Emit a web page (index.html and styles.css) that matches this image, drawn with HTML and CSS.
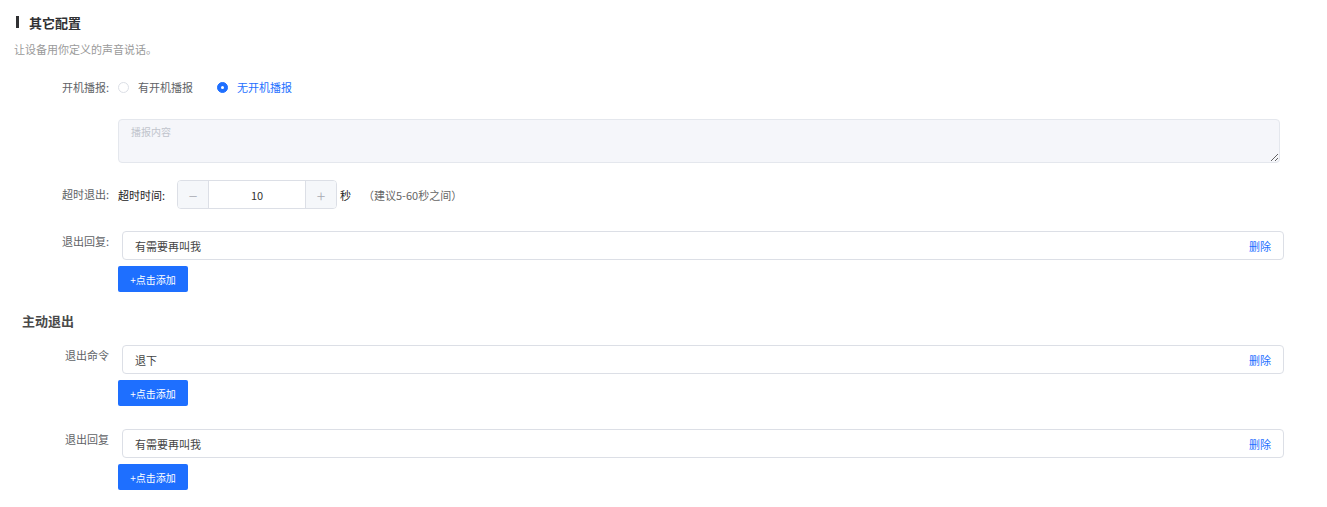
FILE: index.html
```html
<!DOCTYPE html>
<html lang="zh-CN">
<head>
  <meta charset="UTF-8">
  <title>其它配置</title>
  <link rel="stylesheet" href="styles.css">
</head>
<body>

<div class="page">
  <div class="section-title"><span class="bar"></span>其它配置</div>
  <div class="desc">让设备用你定义的声音说话。</div>

  <div class="form-item radio-row">
    <label class="label">开机播报:</label>
    <div class="content">
      <span class="radio"><i class="dot"></i>有开机播报</span>
      <span class="radio checked"><i class="dot"></i>无开机播报</span>
    </div>
  </div>

  <div class="form-item textarea-row">
    <div class="label"></div>
    <div class="content">
      <textarea class="textarea" placeholder="播报内容"></textarea>
    </div>
  </div>

  <div class="form-item timeout-row">
    <label class="label">超时退出:</label>
    <div class="content">
      <span class="sub-label">超时时间:</span>
      <div class="number">
        <span class="num-btn minus">−</span>
        <span class="num-value">10</span>
        <span class="num-btn plus">+</span>
      </div>
      <span class="unit">秒</span>
      <span class="tip">（建议5-60秒之间）</span>
    </div>
  </div>

  <div class="form-item list-row first">
    <label class="label">退出回复:</label>
    <div class="content">
      <div class="list-input"><span>有需要再叫我</span><a class="del">删除</a></div>
      <button class="add-btn">+点击添加</button>
    </div>
  </div>

  <div class="section-title plain">主动退出</div>

  <div class="form-item list-row cmd">
    <label class="label">退出命令</label>
    <div class="content">
      <div class="list-input"><span>退下</span><a class="del">删除</a></div>
      <button class="add-btn">+点击添加</button>
    </div>
  </div>

  <div class="form-item list-row last">
    <label class="label">退出回复</label>
    <div class="content">
      <div class="list-input"><span>有需要再叫我</span><a class="del">删除</a></div>
      <button class="add-btn">+点击添加</button>
    </div>
  </div>
</div>

</body>
</html>
```

FILE: styles.css
```css
body {
  margin: 0;
  background: #fff;
  font-family: "Noto Sans CJK SC", "Noto Sans", sans-serif;
  font-size: 11px;
  color: #606266;
}

.page {
  padding: 14px 43px 20px 0;
}

.section-title {
  display: flex;
  align-items: center;
  height: 16px;
  padding-left: 16px;
  font-size: 13px;
  font-weight: bold;
  color: #303133;
}

.section-title .bar {
  width: 3px;
  height: 12px;
  background: #303133;
  margin-right: 10px;
}

.section-title.plain {
  padding-left: 22px;
  height: 18px;
  margin-top: 19px;
  color: #4a4a4a;
}

.desc {
  margin-top: 11px;
  padding-left: 14px;
  line-height: 16px;
  color: #9a9a9a;
}

.form-item {
  display: flex;
  align-items: flex-start;
}

.label {
  width: 118px;
  flex-shrink: 0;
  box-sizing: border-box;
  padding-right: 9px;
  text-align: right;
  line-height: 20px;
  color: #606266;
}

.content {
  flex: 1;
  min-width: 0;
}

.radio-row {
  margin-top: 20px;
}

.radio-row .content {
  display: flex;
  align-items: center;
  height: 20px;
}

.radio {
  display: inline-flex;
  align-items: center;
  margin-right: 24px;
  color: #606266;
}

.radio .dot {
  width: 9px;
  height: 9px;
  border: 1px solid #dcdfe6;
  border-radius: 50%;
  margin-right: 9px;
  box-sizing: content-box;
  position: relative;
}

.radio.checked {
  color: #1e6fff;
}

.radio.checked .dot {
  background: #1e6fff;
  border-color: #1e6fff;
}

.radio.checked .dot::after {
  content: "";
  position: absolute;
  left: 3px;
  top: 3px;
  width: 3px;
  height: 3px;
  border-radius: 50%;
  background: #fff;
}

.textarea-row {
  margin-top: 22px;
}

.textarea {
  display: block;
  width: calc(100% - 4px);
  height: 44px;
  box-sizing: border-box;
  padding: 4px 12px;
  border: 1px solid #e4e7ed;
  border-radius: 4px;
  background: #f5f6fa;
  font-family: inherit;
  font-size: 10px;
  line-height: 16px;
}

.textarea::placeholder {
  color: #c0c4cc;
}

.timeout-row {
  margin-top: 17px;
}

.timeout-row .label {
  line-height: 29px;
}

.timeout-row .content {
  display: flex;
  align-items: center;
  height: 29px;
}

.sub-label {
  color: #222;
  width: 59px;
}

.number {
  display: flex;
  width: 160px;
  height: 29px;
  box-sizing: border-box;
  border: 1px solid #dcdfe6;
  border-radius: 4px;
  overflow: hidden;
}

.num-btn {
  width: 30px;
  display: flex;
  align-items: center;
  justify-content: center;
  background: #f5f7fa;
  color: #a8abb2;
  font-size: 16px;
  font-weight: 300;
}

.num-btn.minus {
  border-right: 1px solid #dcdfe6;
}

.num-btn.plus {
  border-left: 1px solid #dcdfe6;
}

.num-value {
  flex: 1;
  display: flex;
  align-items: center;
  justify-content: center;
  color: #333;
}

.unit {
  margin-left: 3px;
  color: #222;
}

.tip {
  margin-left: 12px;
  color: #666;
}

.list-row.first {
  margin-top: 22px;
}

.list-row.cmd {
  margin-top: 16px;
}

.list-row.last {
  margin-top: 23px;
}

.list-input {
  display: flex;
  align-items: center;
  justify-content: space-between;
  margin-left: 4px;
  height: 29px;
  box-sizing: border-box;
  padding: 0 12px;
  border: 1px solid #dcdfe6;
  border-radius: 4px;
  color: #444;
}

.del {
  color: #1e6fff;
  cursor: pointer;
}

.add-btn {
  display: block;
  margin-top: 6px;
  width: 70px;
  height: 26px;
  padding: 0;
  border: none;
  border-radius: 2px;
  background: #1e6fff;
  color: #fff;
  font-family: inherit;
  font-size: 10px;
  cursor: pointer;
}
```
